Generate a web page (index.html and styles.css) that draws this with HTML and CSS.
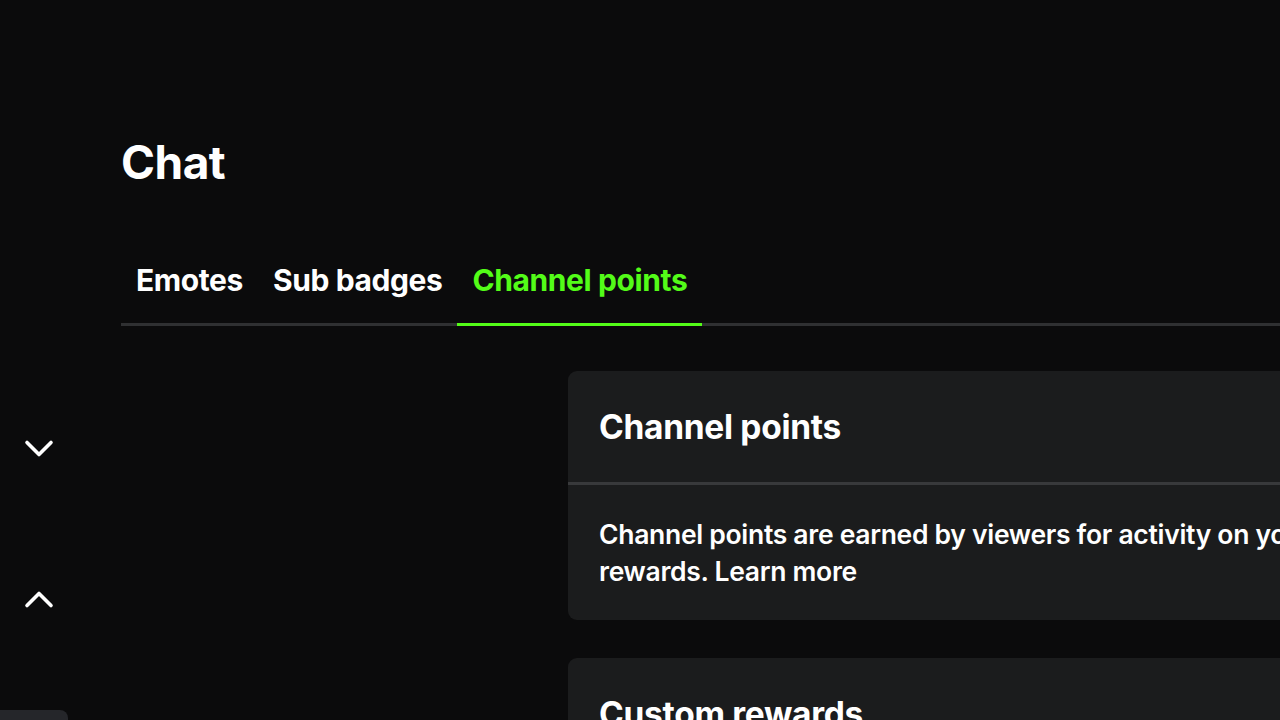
FILE: index.html
```html
<!DOCTYPE html>
<html lang="en">
<head>
<meta charset="utf-8">
<title>Chat</title>
<link rel="stylesheet" href="styles.css">
</head>
<body>
<div class="app">
  <aside class="rail">
    <button class="rail-btn rail-down" aria-label="Next">
      <svg viewBox="0 0 32 20" width="32" height="20"><path d="M4 3.5 L16 15.5 L28 3.5" fill="none" stroke="#fff" stroke-width="3.6" stroke-linecap="round" stroke-linejoin="round"/></svg>
    </button>
    <button class="rail-btn rail-up" aria-label="Previous">
      <svg viewBox="0 0 32 20" width="32" height="20"><path d="M4 16.5 L16 4.5 L28 16.5" fill="none" stroke="#fff" stroke-width="3.6" stroke-linecap="round" stroke-linejoin="round"/></svg>
    </button>
    <div class="rail-chip"></div>
  </aside>
  <main class="main">
    <h1 class="title">Chat</h1>
    <nav class="tabs">
      <a class="tab">Emotes</a>
      <a class="tab">Sub badges</a>
      <a class="tab tab-active">Channel points</a>
    </nav>
    <div class="content">
      <div class="side"></div>
      <div class="cards">
        <section class="card">
          <h2 class="card-head">Channel points</h2>
          <div class="card-body">
            <p class="card-text">Channel points are earned by viewers for activity on your channel and can be redeemed for custom rewards. Learn more</p>
          </div>
        </section>
        <section class="card">
          <h2 class="card-head">Custom rewards</h2>
        </section>
      </div>
    </div>
  </main>
</div>
</body>
</html>
```
FILE: styles.css
```css
html, body {
  margin: 0;
  padding: 0;
  background: #0b0b0c;
  color: #fff;
  font-family: Inter, "Noto Sans", sans-serif;
  overflow: hidden;
  height: 720px;
}
.app {
  display: flex;
  width: 1280px;
  height: 720px;
  overflow: hidden;
}
.rail {
  width: 121px;
  flex: none;
  position: relative;
  display: flex;
  flex-direction: column;
  align-items: flex-start;
  padding-top: 433px;
  box-sizing: border-box;
}
.rail-btn {
  background: none;
  border: 0;
  padding: 0;
  margin-left: 23px;
  width: 32px;
  height: 32px;
  display: flex;
  align-items: center;
  justify-content: center;
}
.rail-up {
  margin-top: 118px;
}
.rail-chip {
  position: absolute;
  left: 0;
  top: 710px;
  width: 68px;
  height: 30px;
  background: #25262a;
  border-radius: 0 8px 0 0;
}
.main {
  flex: 1;
  min-width: 0;
  padding-top: 134px;
}
.title {
  margin: 0;
  font-size: 46px;
  font-weight: 700;
  line-height: 56px;
  letter-spacing: -0.5px;
}
.tabs {
  margin-top: 70px;
  display: flex;
  border-bottom: 3px solid #2f3032;
  width: 1300px;
}
.tab {
  padding: 0 15px 23px;
  font-size: 30px;
  font-weight: 700;
  line-height: 40px;
  letter-spacing: -0.4px;
  color: #fff;
  position: relative;
}
.tab-active {
  color: #53fc18;
}
.tab-active::after {
  content: "";
  position: absolute;
  left: 0;
  right: 0;
  bottom: -3px;
  height: 3px;
  background: #53fc18;
}
.content {
  display: grid;
  grid-template-columns: 447px 1fr;
  margin-top: 45px;
}
.cards {
  display: flex;
  flex-direction: column;
  gap: 38px;
  width: 1400px;
}
.card {
  background: #1b1c1d;
  border-radius: 9px;
}
.card-head {
  margin: 0;
  padding: 34px 31px 0;
  height: 114px;
  box-sizing: border-box;
  font-size: 33.5px;
  font-weight: 700;
  line-height: 44px;
  letter-spacing: -0.3px;
  border-bottom: 3px solid #38393b;
}
.card-body {
  padding: 31px 31px 30px;
}
.card-text {
  margin: 0;
  font-size: 26.5px;
  font-weight: 600;
  line-height: 37px;
  letter-spacing: -0.3px;
  width: 1290px;
}
```
